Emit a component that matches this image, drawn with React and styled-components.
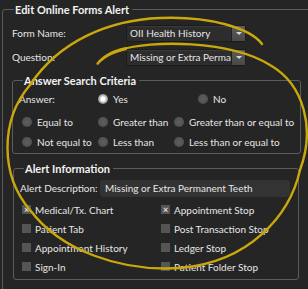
import styled, { createGlobalStyle } from 'styled-components';

const GlobalStyle = createGlobalStyle`
    html, body {
        margin: 0;
        padding: 0;
        background: #252525;
    }
    body {
        font-family: Lato, "Open Sans", sans-serif;
        font-size: 10px;
        color: #e6e6e6;
    }
`

const Page = styled.div`
    position: relative;
    width: 308px;
    height: 289px;
    overflow: hidden;
    background: #252525;
    padding: 3px 0 0 2px;
    box-sizing: border-box;
`

const Group = styled.fieldset`
    margin: 0;
    border: 1px solid #5c5c5c;
    border-radius: 3px;
    width: ${props => props.width};
    height: ${props => props.height};
    box-sizing: border-box;
    padding: ${props => props.pad};
    display: flex;
    flex-direction: column;
`

const Legend = styled.legend`
    font-weight: 700;
    font-size: 11px;
    color: #f2f2f2;
    padding: 0 3px 0 1px;
    margin-left: ${props => props.indent || '2px'};
    line-height: 13px;
`

const FieldRow = styled.div`
    display: flex;
    align-items: center;
    flex-shrink: 0;
    height: ${props => props.height || '24px'};
`

const Label = styled.span`
    width: ${props => props.width};
    flex-shrink: 0;
    white-space: nowrap;
`

const Select = styled.div`
    display: flex;
    align-items: stretch;
    width: 120px;
    height: 17px;
    background: #2d2d2d;
    border: 1px solid #1b1b1b;
    border-radius: 2px;
    box-sizing: border-box;
    box-shadow: inset 0 1px 0 #3a3a3a;
`

const SelectText = styled.span`
    flex: 1;
    padding-left: 3px;
    line-height: 15px;
    white-space: nowrap;
    overflow: hidden;
`

const SelectButton = styled.span`
    width: 13px;
    background: linear-gradient(#5c5c5c, #484848);
    border-left: 1px solid #1f1f1f;
    display: flex;
    align-items: center;
    justify-content: center;
    &::after {
        content: '';
        border-left: 3px solid transparent;
        border-right: 3px solid transparent;
        border-top: 3px solid #d8d8d8;
    }
`

const AnswerRow = styled.div`
    display: grid;
    grid-template-columns: 79px 100px 1fr;
    height: 20px;
    margin-top: 2px;
    align-items: center;
`

const RadioGrid = styled.div`
    display: grid;
    grid-template-columns: 76px 76px 1fr;
    margin: 3px 0 0 3px;
`

const RadioItem = styled.div`
    display: flex;
    align-items: center;
    height: 20px;
    gap: 5px;
    white-space: nowrap;
`

const RadioDot = styled.span`
    width: 10px;
    height: 10px;
    border-radius: 50%;
    flex-shrink: 0;
    background: ${props => props.checked
        ? 'radial-gradient(circle, #ffffff 0 2px, #cfcfcf 3px, #8a8a8a 5px)'
        : 'radial-gradient(circle, #5e5e5e, #4c4c4c)'};
`

const DescBox = styled.div`
    width: 190px;
    height: 17px;
    line-height: 17px;
    background: #333;
    border-radius: 4px;
    padding-left: 5px;
    box-sizing: border-box;
    white-space: nowrap;
`

const CheckGrid = styled.div`
    display: grid;
    grid-template-columns: 139px 1fr;
    margin: 2px 0 0 2px;
`

const CheckItem = styled.div`
    display: flex;
    align-items: center;
    height: 19px;
    gap: 4px;
    white-space: nowrap;
`

const Box = styled.span`
    width: 9px;
    height: 9px;
    background: #555;
    flex-shrink: 0;
    display: flex;
    align-items: center;
    justify-content: center;
    font-size: 9px;
    line-height: 9px;
    font-weight: 700;
    color: #e0e0e0;
`

const Overlay = styled.svg`
    position: absolute;
    left: 0;
    top: 0;
    pointer-events: none;
`

const checks = [
    ['Medical/Tx. Chart', true], ['Appointment Stop', true],
    ['Patient Tab', false], ['Post Transaction Stop', false],
    ['Appointment History', false], ['Ledger Stop', false],
    ['Sign-In', false], ['Patient Folder Stop', false],
]

function Radio({ label, checked }) {
    return (
        <RadioItem>
            <RadioDot checked={checked} />
            <span>{label}</span>
        </RadioItem>
    )
}

export default function App() {
    return (
        <Page>
            <GlobalStyle />
            <Group width="340px" height="320px" pad="5px 0 0 9px">
                <Legend>Edit Online Forms Alert</Legend>
                <FieldRow>
                    <Label width="114px">Form Name:</Label>
                    <Select>
                        <SelectText>OII Health History</SelectText>
                        <SelectButton />
                    </Select>
                </FieldRow>
                <FieldRow>
                    <Label width="114px">Question:</Label>
                    <Select>
                        <SelectText>Missing or Extra Permanent</SelectText>
                        <SelectButton />
                    </Select>
                </FieldRow>

                <Group width="289px" height="80px" pad="0 0 0 6px" style={{ marginTop: 5 }}>
                    <Legend indent="4px">Answer Search Criteria</Legend>
                    <AnswerRow>
                        <span>Answer:</span>
                        <Radio label="Yes" checked />
                        <Radio label="No" />
                    </AnswerRow>
                    <RadioGrid>
                        <Radio label="Equal to" />
                        <Radio label="Greater than" />
                        <Radio label="Greater than or equal to" />
                        <Radio label="Not equal to" />
                        <Radio label="Less than" />
                        <Radio label="Less than or equal to" />
                    </RadioGrid>
                </Group>

                <Group width="286px" height="118px" pad="3px 0 0 6px" style={{ marginTop: 8, marginLeft: 1 }}>
                    <Legend indent="4px">Alert Information</Legend>
                    <FieldRow height="20px">
                        <Label width="80px">Alert Description:</Label>
                        <DescBox>Missing or Extra Permanent Teeth</DescBox>
                    </FieldRow>
                    <CheckGrid>
                        {checks.map(([label, on]) => (
                            <CheckItem key={label}>
                                <Box>{on ? '×' : ''}</Box>
                                <span>{label}</span>
                            </CheckItem>
                        ))}
                    </CheckGrid>
                </Group>
            </Group>

            <Overlay width="308" height="289" viewBox="0 0 308 289">
                <path
                    d="M96 64 C101 56 111 50 126 47 L127 50 C113 53 104 58 98 65 Z"
                    fill="#c9a80c"
                />
                <path
                    d="M120 50 C150 40 230 40 270 65 C305 85 315 130 300 170 C290 215 250 262 180 268 C120 272 60 250 30 210 C0 175 0 120 30 85 C60 40 110 20 160 18 C210 16 250 28 262 44"
                    fill="none"
                    stroke="#c9a80c"
                    strokeWidth="2.4"
                    strokeLinecap="round"
                />
            </Overlay>
        </Page>
    )
}
